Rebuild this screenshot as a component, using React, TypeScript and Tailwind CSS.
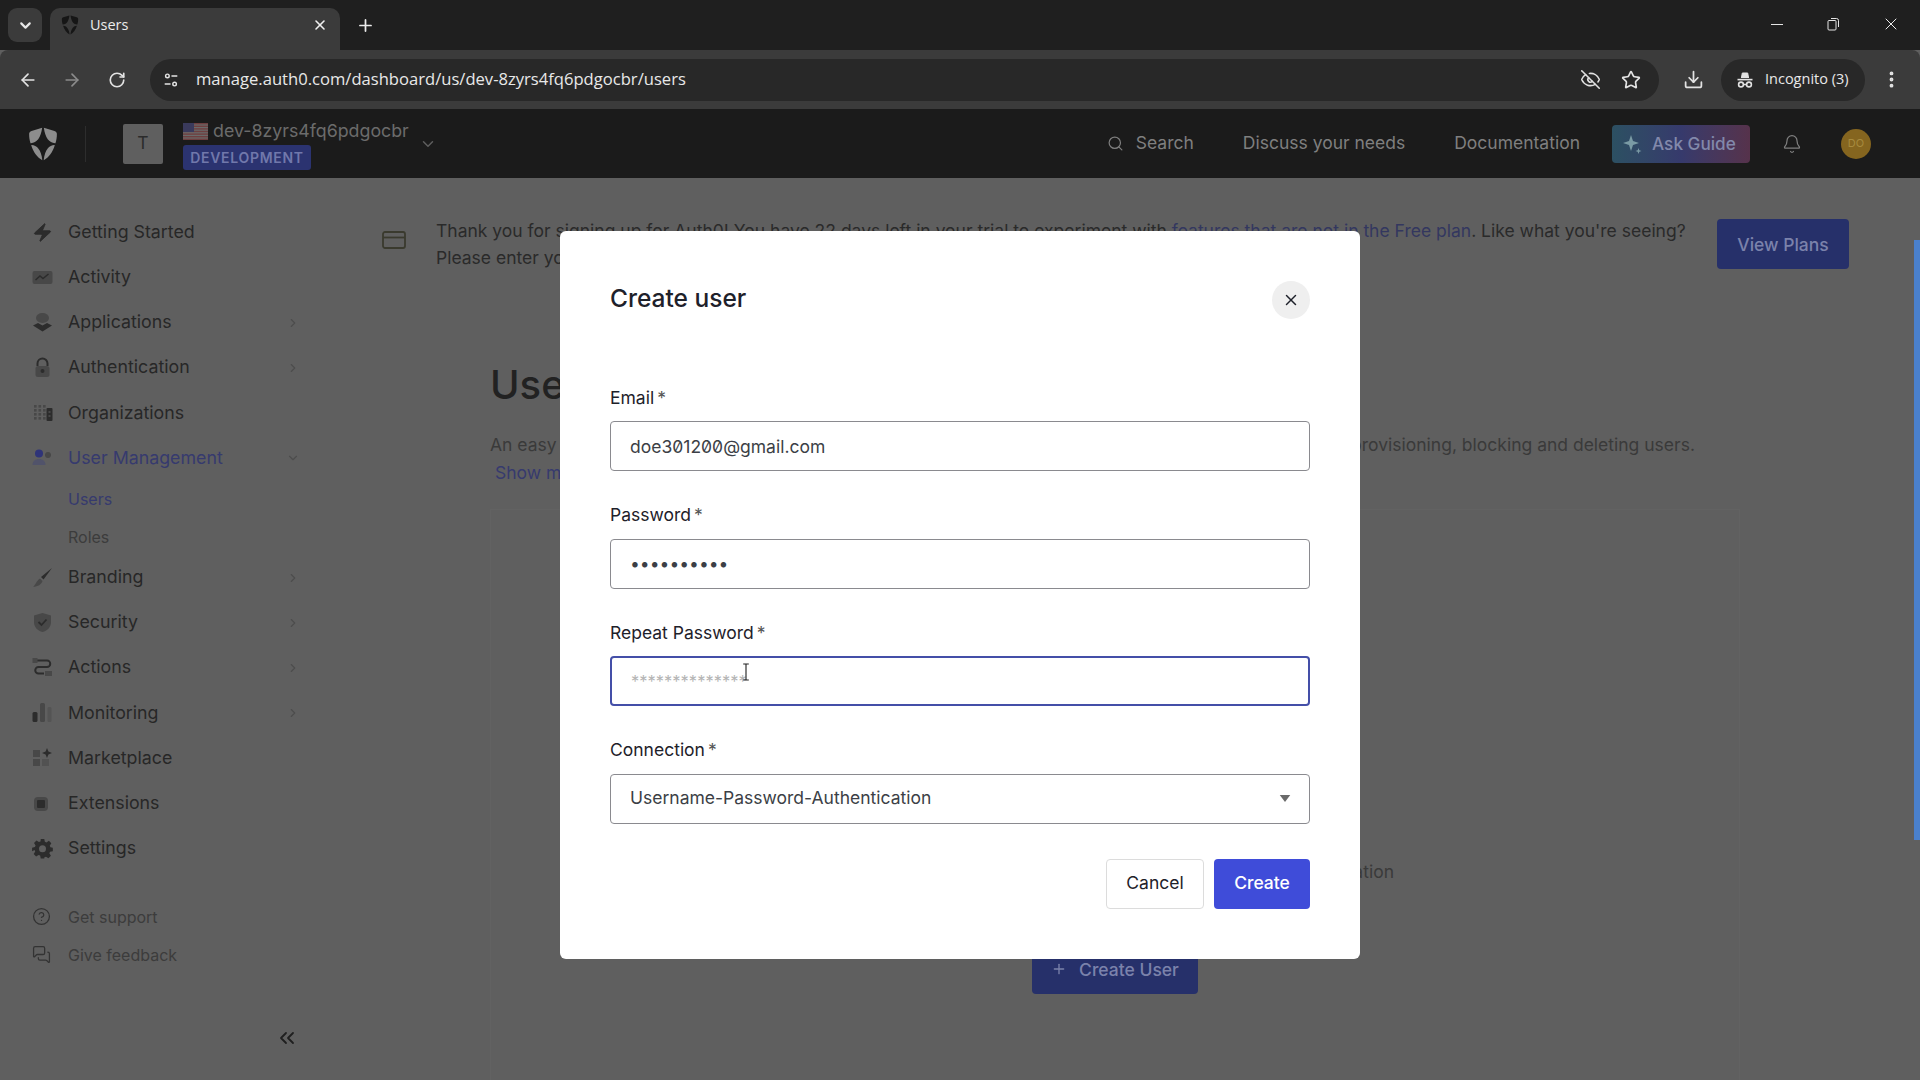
import React from "react";
import {
  ArrowLeft, ArrowRight, RotateCw, Plus, X, ChevronDown, ChevronRight, ChevronsLeft, Star, EyeOff, Download,
  EllipsisVertical, Search, Bell, CircleHelp, MessagesSquare, Zap,
} from "lucide-react";

const sans = "font-['Inter','Liberation_Sans',sans-serif]";

function Shield({ className, fill }: { className?: string; fill: string }) {
  return (
    <svg viewBox="0 0 24 24" className={className} fill={fill}>
      <path d="M11.4 0.6 3.9 2.8C2.8 3.1 2.2 3.9 2.2 5c0 2.4.3 4.5 1 6.4 4.2.2 7.3-3.6 8.2-10.8Z" />
      <path d="M12.6 0.6 20.1 2.8c1.1.3 1.7 1.1 1.7 2.2 0 2.4-.3 4.5-1 6.4-4.2.2-7.3-3.6-8.2-10.8Z" />
      <path d="M3.7 12.8c3.6-.2 7.1 3.2 7.8 10.6-3.6-2-6.4-5.8-7.8-10.6Z" />
      <path d="M20.3 12.8c-3.6-.2-7.1 3.2-7.8 10.6 3.6-2 6.4-5.8 7.8-10.6Z" />
    </svg>
  );
}

function Flag() {
  return (
    <svg viewBox="0 0 25 17" className="w-[25px] h-[17px]">
      <rect width="25" height="17" fill="#6a6a6a" />
      {[0, 2.6, 5.2, 7.8, 10.4, 13, 15.6].map((y) => (
        <rect key={y} y={y} width="25" height="1.4" fill="#6e3f40" />
      ))}
      <rect width="11" height="9" fill="#3a3a5c" />
    </svg>
  );
}

function Incognito() {
  return (
    <svg viewBox="0 0 20 20" className="w-[20px] h-[20px]" fill="none" stroke="#e3e3e3" strokeWidth="1.6">
      <path d="M6.4 8 7.3 3h5.4l.9 5" fill="#e3e3e3" strokeWidth="1" />
      <path d="M2.5 9.6h15" />
      <circle cx="6" cy="14.5" r="2.4" />
      <circle cx="14" cy="14.5" r="2.4" />
      <path d="M8.4 14.5h3.2" />
    </svg>
  );
}

function SiteControls() {
  return (
    <svg viewBox="0 0 20 20" className="w-[18px] h-[18px]" fill="none" stroke="#e3e3e3" strokeWidth="1.6">
      <circle cx="6" cy="5.5" r="2" />
      <path d="M10.5 5.5H17M3 14.5h6.5" />
      <circle cx="14" cy="14.5" r="2" />
    </svg>
  );
}

const dark = "#2c2c2c";
const mid = "#484848";
const navIcons: Record<string, React.ReactNode> = {
  "Getting Started": <Zap size={21} fill={dark} stroke={dark} strokeWidth={1} className="-skew-x-6" />,
  Activity: (
    <svg viewBox="0 0 21 21" className="w-[21px] h-[21px]">
      <rect x="0.5" y="4" width="20" height="13" rx="2" fill={mid} />
      <path d="M3.5 13 8 9l3 2.5L16.5 7" fill="none" stroke={dark} strokeWidth="1.5" />
    </svg>
  ),
  Applications: (
    <svg viewBox="0 0 21 21" className="w-[21px] h-[21px]">
      <ellipse cx="10.5" cy="6" rx="6.5" ry="5" fill={mid} />
      <path d="M1 13.5 6 11l4.5 2.5L15 11l5 2.5-9.5 6Z" fill={dark} />
    </svg>
  ),
  Authentication: (
    <svg viewBox="0 0 21 21" className="w-[21px] h-[21px]">
      <path d="M5.5 9V6.5a5 5 0 0 1 10 0V9" fill="none" stroke={dark} strokeWidth="2" />
      <rect x="3.5" y="9" width="14" height="11" rx="2.5" fill={mid} />
      <circle cx="10.5" cy="14" r="2" fill={dark} />
    </svg>
  ),
  Organizations: (
    <svg viewBox="0 0 21 21" className="w-[21px] h-[21px]" fill={mid}>
      {[2, 6.5, 11].map((x) => [3, 7, 11, 15].map((y) => <rect key={`${x}${y}`} x={x} y={y} width="2.6" height="2.6" />))}
      <rect x="14.5" y="6" width="6" height="13" rx="1" fill={dark} />
      <rect x="16.5" y="9" width="2" height="2" fill={mid} />
      <rect x="16.5" y="13" width="2" height="2" fill={mid} />
    </svg>
  ),
  "User Management": (
    <svg viewBox="0 0 21 21" className="w-[21px] h-[21px]">
      <circle cx="7" cy="5.5" r="4" fill="#2f3479" />
      <circle cx="16" cy="7" r="3" fill={mid} />
      <path d="M0.5 17c0-4 3-6 6.5-6s6.5 2 6.5 6Z" fill="#51536a" />
    </svg>
  ),
  Branding: (
    <svg viewBox="0 0 21 21" className="w-[21px] h-[21px]">
      <path d="M20 1 9 10l2.5 2.5Z" fill={dark} />
      <path d="M8 11.5 10.5 14C9.5 17.5 6 19.5 1 20c2.5-2 3.5-6.5 7-8.5Z" fill={mid} />
    </svg>
  ),
  Security: (
    <svg viewBox="0 0 21 21" className="w-[21px] h-[21px]">
      <path d="M10.5 1 19 3.5V10c0 5.5-4 9-8.5 10C6 19 2 15.5 2 10V3.5Z" fill={mid} />
      <path d="m6.5 10 3 3 5-5.5" fill="none" stroke={dark} strokeWidth="1.8" />
    </svg>
  ),
  Actions: (
    <svg viewBox="0 0 21 21" className="w-[21px] h-[21px]" fill="none">
      <path d="M3 3.5h12a3.2 3.2 0 0 1 0 6.5H6.5a3.2 3.2 0 0 0 0 6.5H12" stroke={dark} strokeWidth="2" />
      <rect x="13" y="14" width="7" height="5" fill={mid} />
      <rect x="0.5" y="1" width="5" height="5" fill={mid} />
    </svg>
  ),
  Monitoring: (
    <svg viewBox="0 0 21 21" className="w-[21px] h-[21px]">
      <rect x="0.5" y="10" width="5" height="10" rx="1.5" fill={dark} />
      <rect x="8" y="1" width="5" height="19" rx="1.5" fill={mid} />
      <rect x="15.5" y="5" width="4" height="15" rx="1.5" fill="#545454" />
    </svg>
  ),
  Marketplace: (
    <svg viewBox="0 0 21 21" className="w-[21px] h-[21px]">
      <rect x="1" y="3" width="7" height="7" fill={mid} />
      <rect x="1" y="12" width="7" height="7" fill={mid} />
      <rect x="10" y="12" width="7" height="7" fill="#525252" />
      <path d="m15 1 1.4 3.6L20 6l-3.6 1.4L15 11l-1.4-3.6L10 6l3.6-1.4Z" fill={dark} />
    </svg>
  ),
  Extensions: (
    <svg viewBox="0 0 21 21" className="w-[21px] h-[21px]">
      <rect x="2" y="4" width="14" height="14" rx="4" fill={mid} />
      <rect x="5" y="7" width="8" height="8" rx="1" fill={dark} />
    </svg>
  ),
  Settings: (
    <svg viewBox="0 0 24 24" className="w-[21px] h-[21px]" fill={dark}>
      <path
        fillRule="evenodd"
        d="M10 1h4l.7 3.2 1.8.8 2.8-1.8 2.8 2.8-1.8 2.8.8 1.8L23.8 11v4l-3.2.7-.8 1.8 1.8 2.8-2.8 2.8-2.8-1.8-1.8.8L14 23.3h-4l-.7-3.2-1.8-.8-2.8 1.8-2.8-2.8 1.8-2.8-.8-1.8L.1 15v-4l3.2-.7.8-1.8-1.8-2.8 2.8-2.8 2.8 1.8 1.8-.8ZM12 8.2a4 4 0 1 0 0 8 4 4 0 0 0 0-8Z"
      />
    </svg>
  ),
};

function NavItem({ label, chevron, active }: { label: string; chevron?: "right" | "down"; active?: boolean }) {
  return (
    <div className="h-[45.1px] flex items-center pl-[32px] pr-[30px]">
      <span className="w-[21px] h-[21px] mr-[15px] shrink-0">{navIcons[label]}</span>
      <span className={`flex-1 text-[17.8px] whitespace-nowrap ${active ? "text-[#363a6e]" : "text-[#272727]"}`}>{label}</span>
      {chevron === "right" && <ChevronRight size={14} color="#4d4d4d" strokeWidth={2} />}
      {chevron === "down" && <ChevronDown size={14} color="#4d4d4d" strokeWidth={2} />}
    </div>
  );
}

function Field({ label, children }: { label: string; children: React.ReactNode }) {
  return (
    <div>
      <div className="h-[26px] mb-[10px] flex items-center text-[17.5px] text-[#1e212a]">
        {label}
        <span className="ml-[3px] text-[#555]">*</span>
      </div>
      {children}
    </div>
  );
}

const inputClass =
  "block w-full h-[50px] px-[19px] rounded-[4px] border border-[#8a8a8f] bg-white text-[17.5px] text-[#3c3f46] outline-none";

export default function App() {
  return (
    <div className={`w-full h-screen overflow-hidden flex flex-col bg-[#5f5f5f] ${sans}`}>
      {/* Browser tab strip */}
      <div className="h-[50px] shrink-0 bg-[#1f1f1f] flex items-end pl-[8px] pr-[19px] font-['Open_Sans',sans-serif]">
        <div className="self-start mt-[8px] w-[34px] h-[34px] rounded-[9px] bg-[#3b3b3b] flex items-center justify-center">
          <ChevronDown size={17} color="#e8e8e8" strokeWidth={3} />
        </div>
        <div className="ml-[8px] w-[290px] h-[42px] bg-[#3b3b3b] rounded-t-[10px] flex items-center pl-[10px] pr-[12px] pb-[8px]">
          <Shield className="ml-[0px] w-[20px] h-[20px]" fill="#161616" />
          <span className="ml-[10px] text-[14.5px] text-[#ececec] flex-1">Users</span>
          <X size={16} color="#f0f0f0" strokeWidth={2.4} />
        </div>
        <div className="ml-[16px] mb-[15px]">
          <Plus size={19} color="#ececec" strokeWidth={2.2} />
        </div>
        <div className="flex-1" />
        <div className="flex items-center gap-[40px] h-[50px] pb-[2px]">
          <svg viewBox="0 0 16 16" className="w-[16px] h-[16px]" fill="none" stroke="#e5e5e5" strokeWidth="1">
            <path d="M2 8.5h12" />
          </svg>
          <svg viewBox="0 0 16 16" className="w-[16px] h-[16px]" fill="none" stroke="#e5e5e5" strokeWidth="1">
            <rect x="3" y="4.5" width="8" height="9.5" rx="1" />
            <path d="M6 2.5h5.5a2 2 0 0 1 2 2V11" />
          </svg>
          <X size={20} color="#ededed" strokeWidth={1.2} />
        </div>
      </div>

      {/* Browser toolbar */}
      <div className="h-[59px] shrink-0 bg-[#3b3b3b] rounded-t-[8px] flex items-center pl-[18px] pr-[17px] font-['Open_Sans',sans-serif]">
        <ArrowLeft size={20} color="#e3e3e3" strokeWidth={2} />
        <ArrowRight size={20} color="#8b8b8b" strokeWidth={2} className="ml-[24px]" />
        <RotateCw size={18} color="#e3e3e3" strokeWidth={2.2} className="ml-[26px]" />
        <div className="ml-[24px] w-[1509px] h-[42px] rounded-full bg-[#282828] flex items-center pl-[12px] pr-[18px]">
          <span className="w-[18px] flex justify-center">
            <SiteControls />
          </span>
          <span className="ml-[16px] flex-1 text-[16.6px] text-[#e8e8e8] whitespace-nowrap">
            manage.auth0.com/dashboard/us/dev-8zyrs4fq6pdgocbr/users
          </span>
          <EyeOff size={21} color="#e0e0e0" strokeWidth={1.8} />
          <Star size={20} color="#e3e3e3" strokeWidth={2} className="ml-[20px]" />
        </div>
        <Download size={21} color="#e3e3e3" strokeWidth={2} className="ml-[24px]" />
        <div className="ml-[17px] w-[144px] h-[42px] rounded-full bg-[#282828] flex items-center pl-[14px]">
          <Incognito />
          <span className="ml-[10px] -mt-[1px] text-[14.5px] text-[#e8e8e8] whitespace-nowrap">Incognito (3)</span>
        </div>
        <EllipsisVertical size={21} color="#e3e3e3" strokeWidth={2.4} className="ml-[16px]" />
      </div>

      {/* App header */}
      <div className="h-[69px] shrink-0 bg-[#1b1b1b] flex items-center text-[17.5px] text-[#7f7f7f]">
        <Shield className="ml-[26px] w-[34px] h-[40px]" fill="#8d8d8d" />
        <div className="ml-[25px] w-px h-[36px] bg-[#2d2d2d]" />
        <div className="ml-[37px] w-[40px] h-[40px] rounded-[2px] bg-[#5f5f5f] flex items-center justify-center text-[#2b2b2b]">T</div>
        <div className="ml-[20px] mt-[3px]">
          <div className="flex items-center h-[22px] gap-[5px] text-[17.8px] text-[#6b6b6b]">
            <Flag />
            <span>dev-8zyrs4fq6pdgocbr</span>
          </div>
          <div className="mt-[3px] w-[128px] h-[25px] rounded-[3px] bg-[#2b3370] flex items-center justify-center text-[14px] font-semibold tracking-[0.7px] text-[#7178ab]">
            DEVELOPMENT
          </div>
        </div>
        <ChevronDown size={18} color="#5e5e5e" className="ml-[10px]" />
        <div className="flex-1" />
        <Search size={17} color="#7f7f7f" strokeWidth={1.7} />
        <span className="ml-[12px]">Search</span>
        <span className="ml-[49px]">Discuss your needs</span>
        <span className="ml-[49px]">Documentation</span>
        <div className="ml-[32px] w-[138px] h-[38px] rounded-[4px] bg-gradient-to-r from-[#2c5062] via-[#363a6c] to-[#56324b] flex items-center pl-[9px] font-medium text-[17.2px] text-[#8289ab]">
          <svg viewBox="0 0 22 22" className="w-[22px] h-[22px]" fill="#7a9ba5">
            <path d="m10 2 2 6 6 2-6 2-2 6-2-6-6-2 6-2Z" />
            <path d="m17.5 15 .8 2.2 2.2.8-2.2.8-.8 2.2-.8-2.2-2.2-.8 2.2-.8Z" />
          </svg>
          <span className="ml-[9px]">Ask Guide</span>
        </div>
        <Bell size={20} color="#7f7f7f" strokeWidth={1.5} className="ml-[32px]" />
        <div className="ml-[39px] mr-[49px] w-[30px] h-[30px] rounded-full bg-[#85651f] flex items-center justify-center text-[11px] text-[#a78a3e]">
          DO
        </div>
      </div>

      {/* Dashboard */}
      <div className="flex-1 min-h-0 flex relative">
        <aside className="w-[330px] shrink-0 flex flex-col pt-[32px] relative">
          <NavItem label="Getting Started" />
          <NavItem label="Activity" />
          <NavItem label="Applications" chevron="right" />
          <NavItem label="Authentication" chevron="right" />
          <NavItem label="Organizations" />
          <NavItem label="User Management" chevron="down" active />
          <div className="pl-[68px] text-[16px] -mt-[1px] -mb-[0.5px]">
            <div className="h-[38px] flex items-center text-[#363a6e]">Users</div>
            <div className="h-[38px] flex items-center text-[#3c3c3c]">Roles</div>
          </div>
          <NavItem label="Branding" chevron="right" />
          <NavItem label="Security" chevron="right" />
          <NavItem label="Actions" chevron="right" />
          <NavItem label="Monitoring" chevron="right" />
          <NavItem label="Marketplace" />
          <NavItem label="Extensions" />
          <NavItem label="Settings" />
          <div className="mt-[27px] pl-[32px] text-[16px] text-[#3c3c3c]">
            <div className="h-[38px] flex items-center gap-[17px]">
              <CircleHelp size={19} color="#333" strokeWidth={1.6} />
              Get support
            </div>
            <div className="h-[38px] flex items-center gap-[17px]">
              <MessagesSquare size={19} color="#333" strokeWidth={1.6} />
              Give feedback
            </div>
          </div>
          <div className="mt-[52px] pr-[31px] flex justify-end">
            <ChevronsLeft size={24} color="#1f1f1f" strokeWidth={1.8} />
          </div>
        </aside>

        <main className="flex-1 min-w-0 text-[17.5px] text-[#2a2a2a] pr-[70px] leading-[27px]">
          <div className="flex pt-[41px]">
            <svg viewBox="0 0 24 18" className="ml-[52px] mt-[12px] w-[24px] h-[18px] shrink-0" fill="none" stroke="#3a3a2e" strokeWidth="1.8">
              <rect x="1" y="1" width="22" height="16" rx="2" />
              <path d="M1 6.5h22" />
            </svg>
            <div className="ml-[30px] w-[1260px] shrink-0 -mt-[2px]">
              <p className="whitespace-nowrap">
                Thank you for signing up for Auth0! You have 22 days left in your trial to experiment with{" "}
                <span className="text-[#33375f]">features that are not in the Free plan</span>. Like what you're seeing?
              </p>
              <p>Please enter your billing details.</p>
            </div>
            <div className="ml-[21px] w-[132px] h-[50px] rounded-[4px] bg-[#26306a] flex items-center justify-center font-medium text-[#7b82ab]">
              View Plans
            </div>
          </div>
          <div className="ml-[160px] mt-[89px] relative">
            <h1 className="text-[40px] leading-[50px] font-medium text-[#222]">Users</h1>
            <p className="mt-[21px] text-[#3a3a3a] whitespace-nowrap">
              An easy to use UI to help administrators manage user identities including password resets, creating and provisioning, blocking and deleting users.
            </p>
            <p className="pl-[5px] pt-[1px] text-[#363a6e]">Show more</p>
            <div className="mt-[23px] w-[1250px] h-[600px] border border-[#626262] flex flex-col items-center pt-[348px]">
              <p className="self-end mr-[345px] whitespace-nowrap text-[#3a3a3a]">organization</p>
              <div className="mt-[59px] w-[166px] h-[50px] rounded-[4px] bg-[#26306a] flex items-center justify-center gap-[12px] font-medium text-[#7b82ab]">
                <Plus size={16} color="#7b82ab" />
                Create User
              </div>
            </div>
          </div>
        </main>

        {/* Scrollbar */}
        <div className="absolute right-0 top-[62px] w-[6px] h-[600px] bg-[#4a80cc]" />

        {/* Modal */}
        <div className="absolute left-[560px] top-[53px] w-[800px] h-[728px] bg-white rounded-[6px] px-[50px] pt-[50px]">
          <div className="flex items-center justify-between h-[40px]">
            <h2 className="text-[24.5px] font-medium text-[#1e212a] -mt-[5px]">Create user</h2>
            <div className="w-[38px] h-[38px] rounded-full bg-[#efefef] flex items-center justify-center -translate-y-[1px]">
              <X size={18} color="#1e212a" strokeWidth={2} />
            </div>
          </div>
          <div className="mt-[64px] flex flex-col gap-[31.5px]">
            <Field label="Email">
              <input readOnly type="text" value="doe301200@gmail.com" className={`${inputClass} [font-feature-settings:'zero']`} />
            </Field>
            <Field label="Password">
              <input readOnly type="password" value="1234567890" className={inputClass} />
            </Field>
            <Field label="Repeat Password">
              <div className="relative">
                <input
                  readOnly
                  type="password"
                  placeholder="**************"
                  className={`${inputClass} border-2 border-[#444fa8] pb-[2px] placeholder:text-[#b5b5b5] placeholder:text-[16.5px]`}
                />
                <svg viewBox="0 0 10 22" className="absolute left-[132px] top-[5px] w-[8px] h-[22px]" fill="none" stroke="#222" strokeWidth="1.4">
                  <path d="M1.5 1h7M5 1v20M1.5 21h7" />
                </svg>
              </div>
            </Field>
            <Field label="Connection">
              <div className={`${inputClass} flex items-center justify-between`}>
                <span>Username-Password-Authentication</span>
                <svg viewBox="0 0 12 8" className="w-[12px] h-[7px] -mr-[1px]" fill="#6a6a6a">
                  <path d="M0 0h12L6 8Z" />
                </svg>
              </div>
            </Field>
          </div>
          <div className="mt-[35px] flex justify-end gap-[10px] text-[17.5px]">
            <div className="w-[98px] h-[50px] rounded-[4px] border border-[#dcdcdc] flex items-center justify-center text-[#1e212a]">Cancel</div>
            <div className="w-[96px] h-[50px] rounded-[4px] bg-[#3f4cd9] flex items-center justify-center font-medium text-white">Create</div>
          </div>
        </div>
      </div>
    </div>
  );
}
